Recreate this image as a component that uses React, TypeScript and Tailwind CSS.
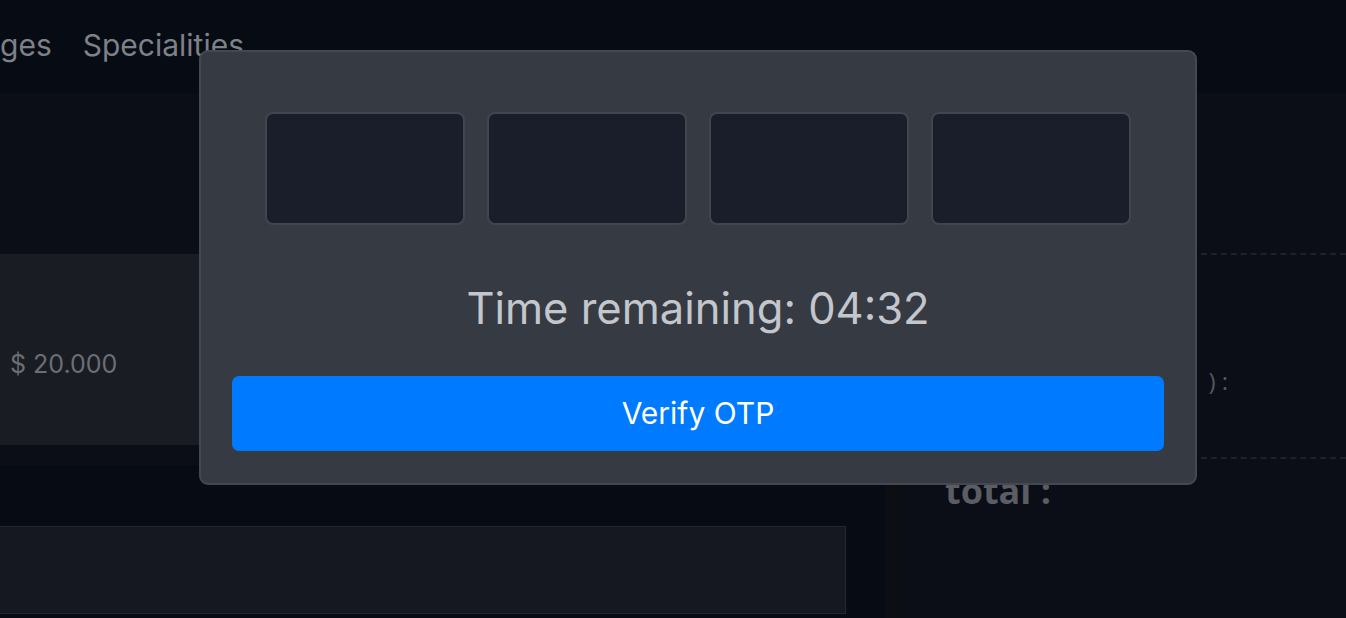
import React from "react";

export default function App() {
  const sans = { fontFamily: "Inter, Roboto, 'Noto Sans', sans-serif" };
  return (
    <div className="relative w-[1346px] h-[618px] overflow-hidden bg-[#070b13]" style={sans}>
      {/* header */}
      <div className="h-[93px] flex items-start pt-[23px] gap-[31px] text-[30px] text-[#7e8188]">
        <span>ges</span>
        <span>Specialities</span>
      </div>
      {/* body */}
      <div className="flex h-[525px]">
        <div className="w-[885px] flex flex-col">
          <div className="bg-[#0b0e16] h-[352px] flex flex-col">
            <div className="h-[161px]" />
            <div className="h-[191px] w-[860px] bg-[#191c23] flex items-center pl-[10px] pt-[30px] text-[25px] text-[#6b6e74]">
              $ 20.000
            </div>
          </div>
          <div className="h-[20px] bg-[#0b0e16]" />
          <div className="h-[61px]" />
          <div className="h-[88px] w-[846px] bg-[#151820] border border-l-0 border-[#24272e]" />
        </div>
        <div className="flex-1 bg-[#0b0e16] border-l-[18px] border-[#0d0d14] flex flex-col">
          <div className="h-[162px] border-b-2 border-dashed border-[#1e2128]" />
          <div className="h-[204px] border-b-2 border-dashed border-[#1e2128] flex items-center justify-end pr-[118px] pt-[50px] text-[24px] text-[#55585e]" style={{ fontFamily: "'Open Sans', sans-serif" }}>
            ) :
          </div>
          <div className="pl-[42px] pt-[12px] text-[36px] font-bold text-[#5a5d63] leading-[40px]" style={{ fontFamily: "'Open Sans', sans-serif" }}>
            total :
          </div>
        </div>
      </div>

      {/* modal */}
      <div className="absolute left-[199px] top-[50px] w-[998px] h-[435px] rounded-[9px] bg-[#363a43] border-2 border-[#454850] px-[31px] pt-[60px]">
        <div className="flex justify-center gap-[22px]">
          {[0, 1, 2, 3].map((i) => (
            <div key={i} className="w-[200px] h-[113px] rounded-[8px] bg-[#1a1d2a] border-2 border-[#42454d]" />
          ))}
        </div>
        <div className="mt-[56px] h-[56px] flex items-center justify-center text-[43.5px] text-[#c3c6cd] leading-none">
          Time remaining: 04:32
        </div>
        <button className="mt-[39px] w-full h-[75px] rounded-[7px] bg-[#007bff] text-white text-[30px] flex items-center justify-center">
          Verify OTP
        </button>
      </div>
    </div>
  );
}
